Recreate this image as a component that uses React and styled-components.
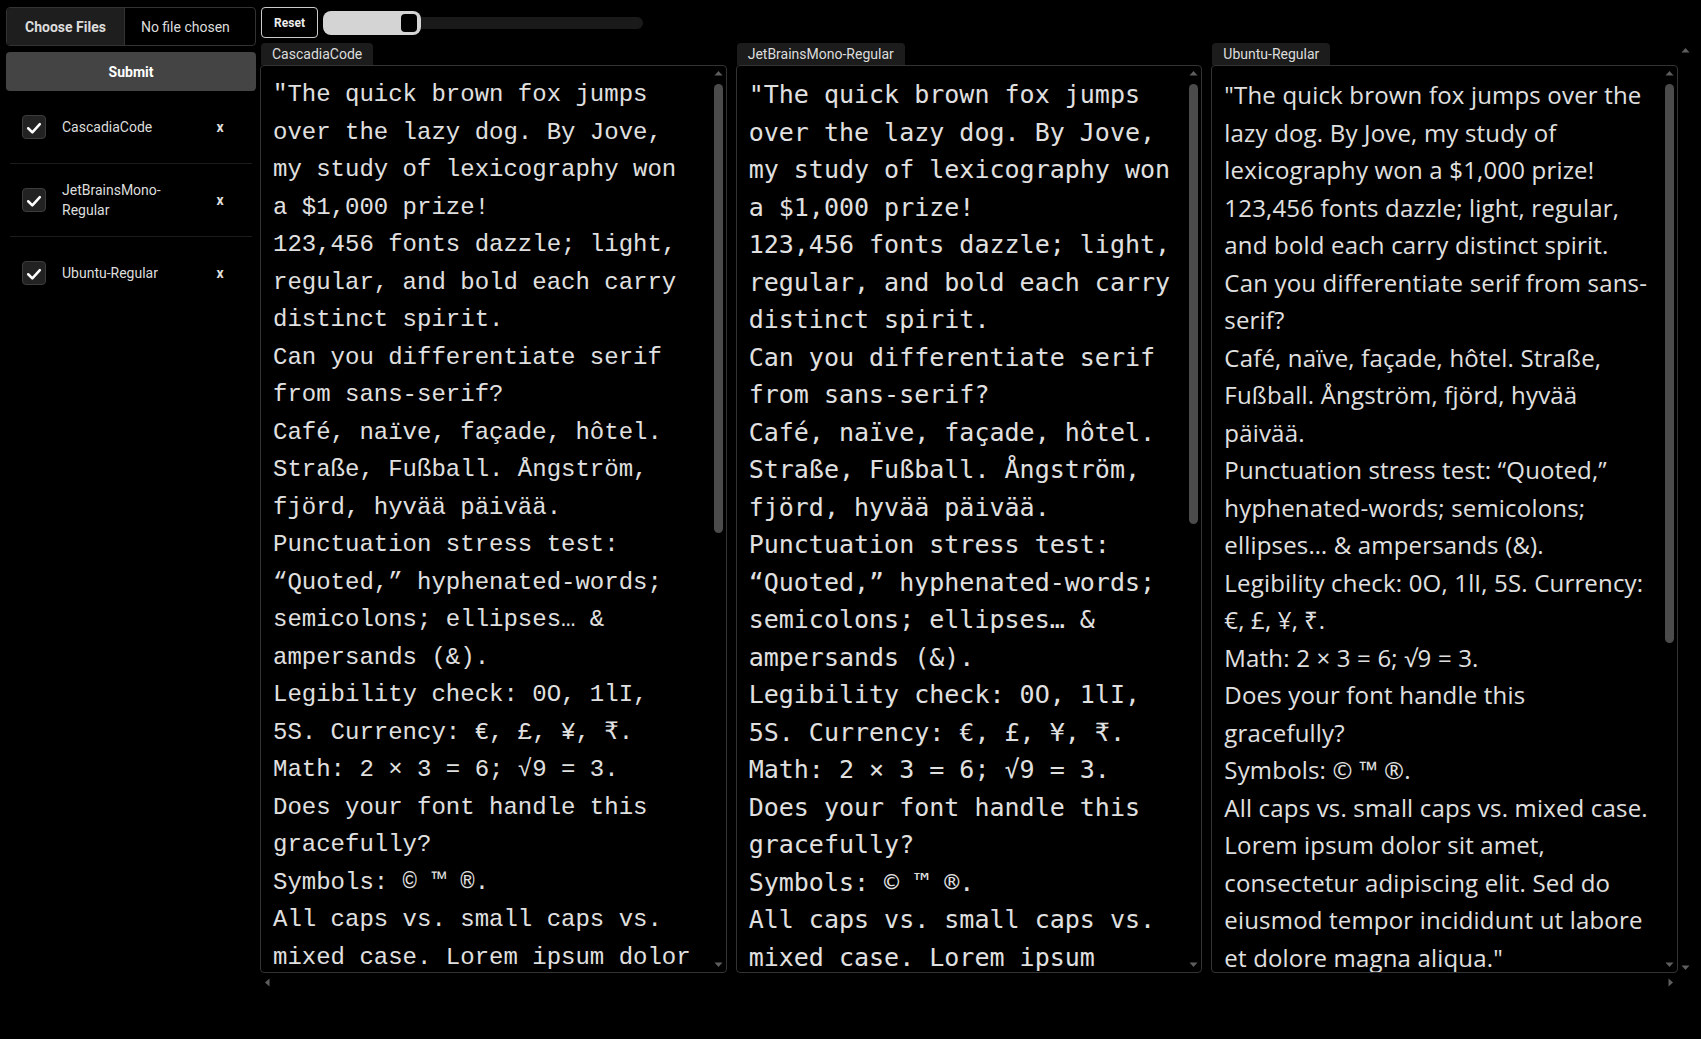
import React from 'react';
import styled, { createGlobalStyle } from 'styled-components';

const SAMPLE = `"The quick brown fox jumps over the lazy dog. By Jove, my study of lexicography won a $1,000 prize!
123,456 fonts dazzle; light, regular, and bold each carry distinct spirit.
Can you differentiate serif from sans-serif?
Café, naïve, façade, hôtel. Straße, Fußball. Ångström, fjörd, hyvää päivää.
Punctuation stress test: “Quoted,” hyphenated-words; semicolons; ellipses… & ampersands (&).
Legibility check: 0O, 1lI, 5S. Currency: €, £, ¥, ₹.
Math: 2 × 3 = 6; √9 = 3.
Does your font handle this gracefully?
Symbols: © ™ ®.
All caps vs. small caps vs. mixed case. Lorem ipsum dolor sit amet, consectetur adipiscing elit. Sed do eiusmod tempor incididunt ut labore et dolore magna aliqua."`;

// uploaded fonts, mapped to the closest installed family
// visible: share of the preview text that fits in the box (scroll thumb size)
const FONTS = [
	{ name: 'CascadiaCode', family: '"Liberation Mono", monospace', size: 24, spacing: 0, visible: 0.516 },
	{ name: 'JetBrainsMono-Regular', family: '"DejaVu Sans Mono", monospace', size: 25, spacing: 0, visible: 0.506 },
	{ name: 'Ubuntu-Regular', family: '"Open Sans", sans-serif', size: 24, spacing: 0.18, visible: 0.643 },
];

const ARROWS = {
	up: '3.5,9.5 11.5,9.5 7.5,5',
	down: '3.5,5.5 11.5,5.5 7.5,10',
	left: '9.5,3.5 9.5,11.5 5,7.5',
	right: '5.5,3.5 5.5,11.5 10,7.5',
};

const GlobalStyle = createGlobalStyle`
	html {
		color-scheme: dark;
	}
	body {
		margin: 0;
		background: #000;
		color: #ddd;
		font-family: Roboto, "Noto Sans", sans-serif;
	}
`;

const CheckIcon = () => (
	<svg width="20" height="20" viewBox="0 0 24 24" fill="none">
		<polyline
			points="5,13.5 10,18.5 19,8.5"
			stroke="#fff"
			strokeWidth="3"
			strokeLinecap="round"
			strokeLinejoin="round"
		/>
	</svg>
);

const Arrow = ({ dir }) => (
	<svg width="15" height="15" viewBox="0 0 15 15">
		<polygon points={ARROWS[dir]} fill="#5e5e5e" />
	</svg>
);

const FontRow = ({ name }) => (
	<Row>
		<Check type="button" aria-label={`toggle ${name}`}>
			<CheckIcon />
		</Check>
		<RowName>{name}</RowName>
		<RemoveButton type="button">x</RemoveButton>
	</Row>
);

const FontPanel = ({ font }) => (
	<Panel>
		<Tab>{font.name}</Tab>
		<EditorFrame>
			<Editor
				$family={font.family}
				$size={font.size}
				$spacing={font.spacing}
				defaultValue={SAMPLE}
				spellCheck={false}
			/>
			<Rail>
				<RailButton>
					<Arrow dir="up" />
				</RailButton>
				<RailTrack>
					<RailThumb style={{ height: `${font.visible * 100}%` }} />
				</RailTrack>
				<RailButton>
					<Arrow dir="down" />
				</RailButton>
			</Rail>
		</EditorFrame>
	</Panel>
);

export default function App() {
	return (
		<>
			<GlobalStyle />
			<Shell>
				<Sidebar>
					<FileInput type="file" multiple />
					<SubmitButton type="button">Submit</SubmitButton>
					<FontList>
						{FONTS.map((f) => (
							<FontRow key={f.name} name={f.name} />
						))}
					</FontList>
				</Sidebar>
				<Main>
					<Toolbar>
						<ResetButton type="button">Reset</ResetButton>
						<Slider>
							<SliderFill>
								<SliderThumb />
							</SliderFill>
							<SliderRest />
						</Slider>
					</Toolbar>
					<PanelScroller>
						<PanelViewport>
							<PanelGrid>
								{FONTS.map((f) => (
									<FontPanel key={f.name} font={f} />
								))}
							</PanelGrid>
						</PanelViewport>
						<OuterRail $dir="column">
							<Arrow dir="up" />
							<Arrow dir="down" />
						</OuterRail>
						<OuterRail $dir="row">
							<Arrow dir="left" />
							<Arrow dir="right" />
						</OuterRail>
					</PanelScroller>
				</Main>
			</Shell>
		</>
	);
}

const Shell = styled.div`
	display: grid;
	grid-template-columns: 250px 1fr;
	column-gap: 4px;
	padding: 7px 8px 0 6px;
	height: 100vh;
	box-sizing: border-box;
`;

const Sidebar = styled.aside`
	display: flex;
	flex-direction: column;
	min-width: 0;
`;

const FileInput = styled.input`
	box-sizing: border-box;
	width: 100%;
	height: 39px;
	padding: 0;
	border: 1px solid #333;
	border-radius: 4px;
	background: #000;
	color: #ddd;
	font-family: Roboto, "Noto Sans", sans-serif;
	font-size: 14px;

	&::file-selector-button {
		height: 100%;
		margin: 0 16px 0 0;
		padding: 0 18px;
		border: none;
		border-right: 1px solid #333;
		border-radius: 3px 0 0 3px;
		background: #1e1e1e;
		color: #ddd;
		font-family: inherit;
		font-size: 14px;
		font-weight: 700;
	}
`;

const SubmitButton = styled.button`
	height: 39px;
	margin-top: 6px;
	border: none;
	border-radius: 4px;
	background: #444;
	color: #fff;
	font-family: Roboto, "Noto Sans", sans-serif;
	font-size: 14px;
	font-weight: 700;
`;

const FontList = styled.div`
	display: flex;
	flex-direction: column;
`;

const Row = styled.div`
	display: flex;
	align-items: center;
	min-height: 72px;
	margin: 0 4px;
	padding: 0 12px;
	border-bottom: 1px solid #1c1c1c;

	&:last-child {
		border-bottom: none;
	}
`;

const Check = styled.button`
	flex: none;
	display: grid;
	place-items: center;
	width: 24px;
	height: 24px;
	padding: 0;
	border: 1px solid #3c3c3c;
	border-radius: 4px;
	background: #222;
`;

const RowName = styled.span`
	flex: 1;
	min-width: 0;
	margin-left: 16px;
	font-size: 14px;
	line-height: 20px;
	color: #ddd;
`;

const RemoveButton = styled.button`
	flex: none;
	width: 40px;
	padding: 0;
	border: none;
	background: none;
	color: #ddd;
	font-family: Roboto, "Noto Sans", sans-serif;
	font-size: 14px;
	font-weight: 700;
`;

const Main = styled.main`
	display: flex;
	flex-direction: column;
	gap: 5px;
	min-width: 0;
`;

const Toolbar = styled.div`
	display: flex;
	align-items: center;
	gap: 5px;
	height: 31px;
	padding-left: 1px;
`;

const ResetButton = styled.button`
	height: 31px;
	width: 57px;
	padding: 0;
	border: 1px solid #ccc;
	border-radius: 4px;
	background: #000;
	color: #eee;
	font-family: Roboto, "Noto Sans", sans-serif;
	font-size: 12px;
	font-weight: 700;
`;

const Slider = styled.div`
	display: flex;
	align-items: center;
	width: 320px;
`;

const SliderFill = styled.div`
	display: flex;
	align-items: center;
	justify-content: flex-end;
	width: 98px;
	height: 24px;
	padding-right: 4px;
	box-sizing: border-box;
	border-radius: 8px;
	background: #d4d4d4;
`;

const SliderThumb = styled.div`
	width: 16px;
	height: 18px;
	border-radius: 4px;
	background: #000;
`;

const SliderRest = styled.div`
	flex: 1;
	height: 12px;
	border-radius: 0 6px 6px 0;
	background: #1a1a1a;
`;

const PanelScroller = styled.div`
	display: grid;
	grid-template-columns: minmax(0, 1fr) 15px;
	grid-template-rows: minmax(0, 1fr) 15px;
	height: calc(100vh - 92px);
`;

const PanelViewport = styled.div`
	overflow: auto;
	min-height: 0;
`;

const OuterRail = styled.div`
	display: flex;
	flex-direction: ${(p) => p.$dir};
	justify-content: space-between;
`;

const PanelGrid = styled.div`
	display: grid;
	grid-template-columns: repeat(3, minmax(0, 1fr));
	gap: 9px;
`;

const Panel = styled.section`
	display: flex;
	flex-direction: column;
	min-width: 0;
`;

const Tab = styled.div`
	align-self: flex-start;
	height: 22px;
	margin-left: 1px;
	padding: 0 11px;
	border-radius: 4px 4px 0 0;
	background: #1c1c1c;
	color: #ddd;
	font-size: 14px;
	line-height: 22px;
`;

const EditorFrame = styled.div`
	display: flex;
	height: 908px;
	box-sizing: border-box;
	border: 1px solid #333;
	border-radius: 4px;
	background: #000;
	overflow: hidden;
`;

const Editor = styled.textarea`
	flex: 1;
	min-width: 0;
	box-sizing: border-box;
	height: 100%;
	margin: 0;
	padding: 10px 12px 7px;
	border: none;
	background: transparent;
	color: #e0e0e0;
	font-family: ${(p) => p.$family};
	font-size: ${(p) => p.$size}px;
	letter-spacing: ${(p) => p.$spacing}px;
	line-height: 37.5px;
	resize: none;
	overflow-y: scroll;
	outline: none;
`;

const Rail = styled.div`
	flex: none;
	display: flex;
	flex-direction: column;
	width: 15px;
`;

const RailButton = styled.div`
	flex: none;
	height: 15px;
`;

const RailTrack = styled.div`
	flex: 1;
	min-height: 0;
	padding: 3px;
`;

const RailThumb = styled.div`
	width: 9px;
	border-radius: 5px;
	background: #4b4b4b;
`;
